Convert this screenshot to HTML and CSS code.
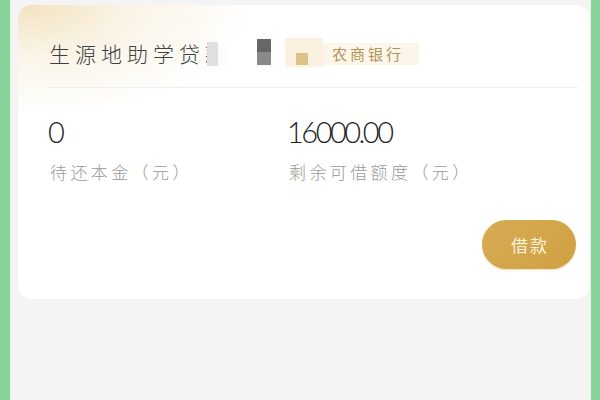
FILE: index.html
```html
<!DOCTYPE html>
<html lang="zh">
<head>
<meta charset="utf-8">
<link rel="stylesheet" href="styles.css">
</head>
<body>
<div class="page">
  <div class="edge edge-left"></div>
  <main class="main">
    <section class="card">
      <header class="head">
        <div class="head-row">
          <span class="title">生源地助学贷款</span>
          <span class="blur-light"></span>
          <span class="blur-dark"></span>
          <span class="tag">
            <span class="tag-left"><span class="tag-sq"></span></span>
            <span class="tag-right">农商银行</span>
          </span>
        </div>
      </header>
      <div class="divider"></div>
      <div class="stats">
        <div class="stat">
          <div class="num">0</div>
          <div class="label">待还本金（元）</div>
        </div>
        <div class="stat">
          <div class="num">16000.00</div>
          <div class="label">剩余可借额度（元）</div>
        </div>
      </div>
      <div class="actions">
        <button class="btn">借款</button>
      </div>
    </section>
  </main>
  <div class="edge edge-right"></div>
</div>
</body>
</html>
```

FILE: styles.css
```css
* { box-sizing: border-box; }
html, body { margin: 0; padding: 0; }
body {
  width: 600px;
  height: 400px;
  overflow: hidden;
  background: #f4f4f4;
  font-family: "Noto Sans CJK SC", "Noto Sans", sans-serif;
}
.page {
  display: flex;
  height: 400px;
}
.edge { flex: none; height: 100%; }
.edge-left {
  width: 12px;
  background: linear-gradient(to right, #87d39a 0, #87d39a 10px, #d8f2dd 10px, #eef8f0 12px);
}
.edge-right {
  width: 10px;
  background: linear-gradient(to right, #e3f5e7 0, #e3f5e7 1px, #87d39a 1px);
}
.main {
  flex: 1;
  padding: 5px 0 0 6px;
}
.card {
  height: 294px;
  border-radius: 14px;
  background:
    radial-gradient(ellipse 230px 110px at 10px 0, rgba(242, 225, 190, 0.95) 0%, rgba(247, 236, 214, 0.6) 45%, rgba(255, 255, 255, 0) 100%),
    #ffffff;
}
.head {
  height: 82px;
  padding: 33px 0 0 31px;
}
.head-row {
  display: flex;
  align-items: flex-end;
  height: 29px;
}
.title {
  font-size: 21px;
  font-weight: 300;
  line-height: 28px;
  letter-spacing: 5px;
  color: #3f3f3f;
  white-space: nowrap;
}
.blur-light {
  width: 22px;
  height: 24px;
  margin: 0 0 1px -24px;
  background: linear-gradient(to right, #e0e0e0 0, #e0e0e0 11px, #fdfcfa 11px);
}
.blur-dark {
  width: 14px;
  height: 26px;
  margin: 0 0 2px 28px;
  background: linear-gradient(to bottom, #666 0, #666 50%, #8a8a8a 50%);
}
.tag {
  display: flex;
  align-items: flex-end;
  margin-left: 14px;
  height: 29px;
}
.tag-left {
  display: flex;
  align-items: flex-end;
  width: 38px;
  height: 29px;
  padding: 0 0 2px 11px;
  background: #fbf1e0;
}
.tag-sq {
  width: 12px;
  height: 12px;
  background: #dcc489;
}
.tag-right {
  height: 22px;
  margin-bottom: 2px;
  padding: 0 15px 0 9px;
  background: #fcf5ea;
  font-size: 15px;
  line-height: 22px;
  letter-spacing: 3px;
  color: #b39354;
}
.divider {
  height: 1px;
  margin: 0 12px 0 30px;
  background: #efefef;
}
.stats {
  display: grid;
  grid-template-columns: 239px 1fr;
  padding: 29px 0 0 30px;
}
.num {
  font-family: Lato, "Liberation Sans", sans-serif;
  font-weight: 300;
  font-size: 29px;
  line-height: 30px;
  letter-spacing: -2.5px;
  color: #222;
}
.label {
  margin-top: 13px;
  padding-left: 2px;
  font-size: 17px;
  font-weight: 300;
  line-height: 24px;
  letter-spacing: 3.4px;
  color: #999;
}
.actions {
  display: flex;
  justify-content: flex-end;
  padding: 36px 14px 0 0;
}
.btn {
  width: 94px;
  height: 49px;
  border: none;
  border-radius: 25px;
  background: linear-gradient(135deg, #d6ab53 0%, #d0a142 100%);
  box-shadow: 0 1px 2px rgba(180, 140, 60, 0.3);
  color: #fbf3dc;
  font-family: "Noto Sans CJK SC", sans-serif;
  font-size: 17px;
  letter-spacing: 2px;
  padding: 0 0 0 2px;
}
```
